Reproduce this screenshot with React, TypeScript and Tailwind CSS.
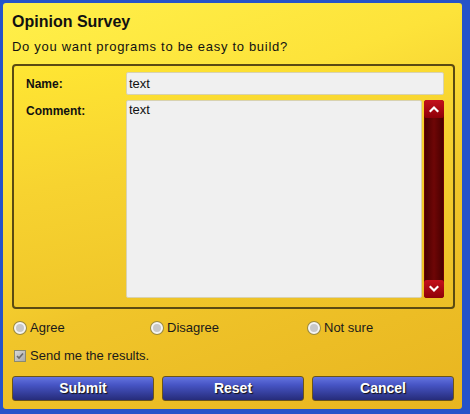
const ChevronUp = () => (
  <svg width="10" height="8" viewBox="0 0 10 8" fill="none" stroke="white" strokeWidth="2.2" strokeLinecap="square">
    <path d="M1.5 6 5 2.5 8.5 6" />
  </svg>
);

const ChevronDown = () => (
  <svg width="10" height="8" viewBox="0 0 10 8" fill="none" stroke="white" strokeWidth="2.2" strokeLinecap="square">
    <path d="M1.5 2 5 5.5 8.5 2" />
  </svg>
);

const Radio = ({ label, width }: { label: string; width: string }) => (
  <label className={`flex items-center gap-[4px] ${width}`}>
    <span className="w-[12px] h-[12px] rounded-full bg-[#c8c8c8] border-2 border-[#f4f4f4] shadow-[0_0_0_1px_#9a8a40]" />
    <span className="text-[13px] leading-[16px] text-[#1a1a1a]">{label}</span>
  </label>
);

const buttons = ["Submit", "Reset", "Cancel"];

export default function App() {
  return (
    <div
      className="w-[470px] h-[414px] bg-[#2553c9] pl-[3px] pt-[3px] pr-[8px] pb-[5px]"
      style={{ fontFamily: '"Liberation Sans", Arial, sans-serif' }}
    >
      <div className="h-full rounded-[3px] bg-[linear-gradient(160deg,#fff04a_0%,#fde33a_30%,#f0c52a_60%,#e8b520_100%)] pl-[9px] pr-[4px] flex flex-col">
        {/* Header */}
        <h1 className="mt-[9px] text-[16px] leading-[20px] font-bold text-[#111]">Opinion Survey</h1>
        <p className="mt-[7px] text-[13px] leading-[16px] tracking-[0.7px] text-[#111]">Do you want programs to be easy to build?</p>

        {/* Form panel */}
        <div className="mt-[9px] w-[443px] h-[245px] rounded-[4px] border-2 border-[#5a4a12] bg-[linear-gradient(170deg,#ffe633_0%,#f7d330_40%,#ecbf26_100%)] pl-[12px] pr-[9px] pt-[6px] flex flex-col gap-[5px]">
          <div className="flex items-center">
            <span className="w-[100px] text-[12px] font-bold text-[#111]">Name:</span>
            <div className="w-[318px] h-[23px] bg-[#f0f0f0] border border-[#d8d2b0] rounded-[2px] px-[2px] flex items-center text-[13px] text-[#111]">
              text
            </div>
          </div>
          <div className="flex">
            <span className="w-[100px] pt-[2px] text-[12px] font-bold text-[#111]">Comment:</span>
            <div className="w-[296px] h-[198px] bg-[#f0f0f0] border border-[#d8d2b0] rounded-[2px] px-[2px] text-[13px] leading-[17px] text-[#111]">
              text
            </div>
            <div className="ml-[2px] w-[20px] h-[198px] flex flex-col rounded-[3px] bg-[#6a0404]">
              <div className="h-[18px] rounded-[3px] bg-[linear-gradient(#c4101c,#8e0008)] flex items-center justify-center">
                <ChevronUp />
              </div>
              <div className="flex-1 mx-[1px] bg-[linear-gradient(90deg,#4a0000,#6e0606,#4a0000)]" />
              <div className="h-[18px] rounded-[3px] bg-[linear-gradient(#c4101c,#8e0008)] flex items-center justify-center">
                <ChevronDown />
              </div>
            </div>
          </div>
        </div>

        {/* Radios */}
        <div className="mt-[11px] ml-[2px] flex">
          <Radio label="Agree" width="w-[137px]" />
          <Radio label="Disagree" width="w-[157px]" />
          <Radio label="Not sure" width="w-[120px]" />
        </div>

        {/* Checkbox */}
        <label className="mt-[12px] ml-[2px] flex items-center gap-[4px]">
          <span className="w-[12px] h-[12px] bg-[linear-gradient(135deg,#d8d8d8,#a8a8a8)] border border-[#8a8a70] flex items-center justify-center">
            <svg width="8" height="8" viewBox="0 0 8 8" fill="none" stroke="#6a6a6a" strokeWidth="1.6">
              <path d="M1 4 3 6 7 1.5" />
            </svg>
          </span>
          <span className="text-[13px] leading-[16px] text-[#1a1a1a]">Send me the results.</span>
        </label>

        {/* Buttons */}
        <div className="mt-[12px] flex gap-[8px]">
          {buttons.map((b) => (
            <button
              key={b}
              className="w-[142px] h-[25px] rounded-[3px] border border-[#6a5418] bg-[linear-gradient(180deg,#6474e0_0%,#4654c4_35%,#262c7a_100%)] text-white text-[14px] font-bold [text-shadow:1px_1px_1px_#111]"
            >
              {b}
            </button>
          ))}
        </div>
      </div>
    </div>
  );
}
